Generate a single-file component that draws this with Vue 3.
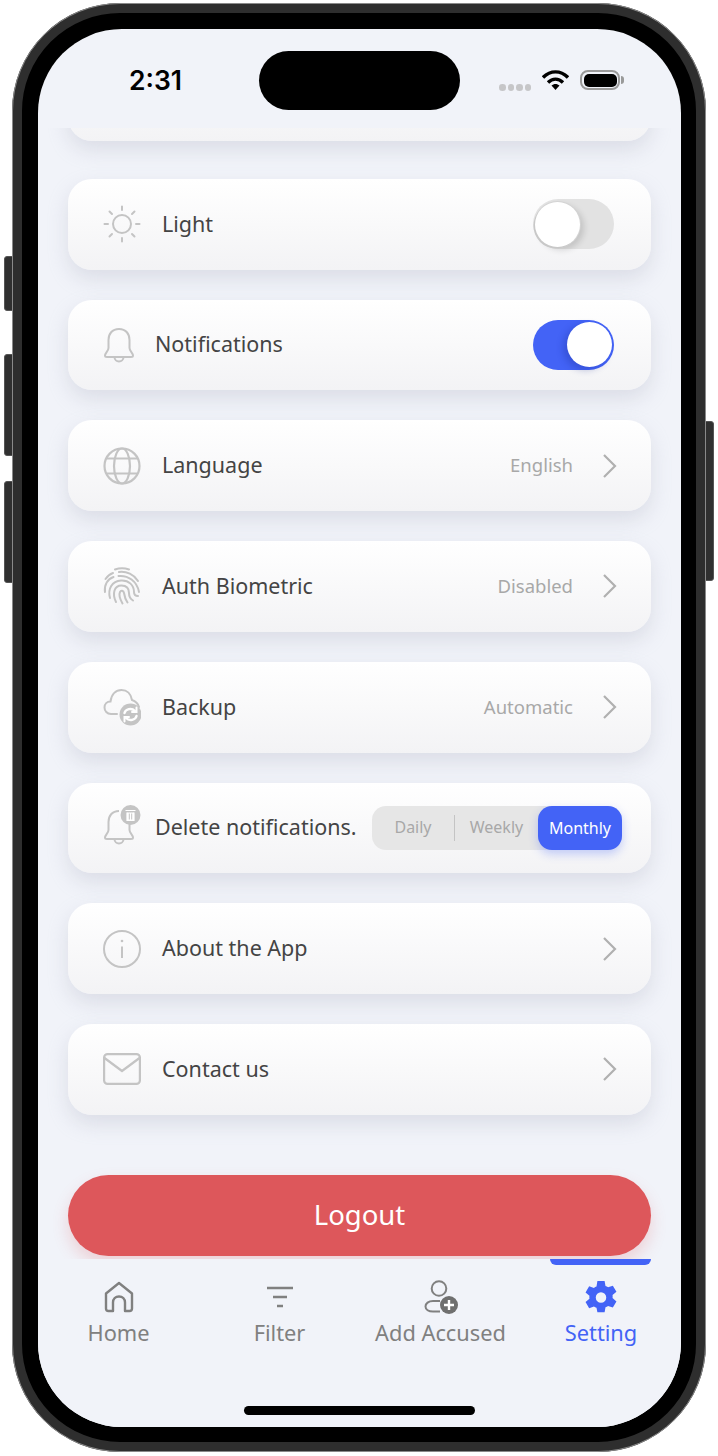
<script setup>
const rows = [
  { id: "light", label: "Light", icon: "sun", toggle: false },
  { id: "notifications", label: "Notifications", icon: "bell", toggle: true, narrow: true },
  { id: "language", label: "Language", icon: "globe", value: "English" },
  { id: "biometric", label: "Auth Biometric", icon: "finger", value: "Disabled" },
  { id: "backup", label: "Backup", icon: "cloud", value: "Automatic" },
  { id: "delete", label: "Delete notifications.", icon: "bellTrash", narrow: true, segment: true },
  { id: "about", label: "About the App", icon: "info", chevron: true },
  { id: "contact", label: "Contact us", icon: "mail", chevron: true }
]

const tabs = [
  { label: "Home", icon: "home" },
  { label: "Filter", icon: "filter" },
  { label: "Add Accused", icon: "add" },
  { label: "Setting", icon: "gear", active: true }
]
</script>

<template>
  <div class="page">
    <span class="side side-a"></span>
    <span class="side side-b"></span>
    <span class="side side-c"></span>
    <span class="side side-r"></span>
    <div class="phone">
      <div class="screen">
        <div class="status">
          <span class="time">2:31</span>
          <span class="island"></span>
          <div class="status-right">
            <div class="dots"><i></i><i></i><i></i><i></i></div>
            <svg width="27" height="20" viewBox="0 0 27 20">
              <path d="M1 7.500C8.500 0 18.500 0 26 7.500" fill="none" stroke="#000" stroke-width="3.400" />
              <path d="M6 12.500C10.500 8 16.500 8 21 12.500" fill="none" stroke="#000" stroke-width="3.400" />
              <path d="M9.500 15.500C11.800 13.400 15.200 13.400 17.500 15.500L13.500 20Z" fill="#000" />
            </svg>
            <div class="battery"><span class="cell"></span><span class="nub"></span></div>
          </div>
        </div>

        <div class="content">
          <div class="card cut"></div>
          <div v-for="row in rows" :key="row.id" class="card" :class="{ narrow: row.narrow }">
            <div class="icon">
              <svg v-if="row.icon === 'sun'" width="38" height="38" viewBox="0 0 38 38" fill="none" stroke="#c4c4c4" stroke-width="2" stroke-linecap="round">
                <circle cx="19" cy="19" r="9" />
                <path d="M19 1.500v3.500M19 33v3.500M1.500 19H5M33 19h3.500M6.500 6.500l2.500 2.500M29 29l2.500 2.500M31.500 6.500L29 9M9 29l-2.500 2.500" />
              </svg>
              <svg v-else-if="row.icon === 'bell'" width="32" height="36" viewBox="0 0 32 36" fill="none" stroke="#c4c4c4" stroke-width="2" stroke-linejoin="round">
                <path d="M16 2C9 2 5.500 7 5.500 13V21C5.500 24 2 26 2 28.500C2 29.500 2.800 30 4 30H28C29.200 30 30 29.500 30 28.500C30 26 26.500 24 26.500 21V13C26.500 7 23 2 16 2Z" />
                <path d="M11.500 30C11.500 36 20.500 36 20.500 30" />
              </svg>
              <svg v-else-if="row.icon === 'globe'" width="38" height="38" viewBox="0 0 38 38" fill="none" stroke="#c4c4c4" stroke-width="2.200">
                <circle cx="19" cy="19" r="17.500" />
                <ellipse cx="19" cy="19" rx="8" ry="17.500" />
                <path d="M4 11.500H34M4 26.500H34" />
              </svg>
              <svg v-else-if="row.icon === 'finger'" width="38" height="38" viewBox="0 0 38 38" fill="none" stroke="#c4c4c4" stroke-width="2" stroke-linecap="round">
                <path d="M12 2.500C16.500 1 21.500 1 26 2.500" />
                <path d="M2.500 12C4.500 9 7 7 10 6M16 5C23.500 4 31 7.500 35 14" />
                <path d="M2 25C1 18 4.500 12 10.500 10M15.500 9C25 8 34 14 36 25" />
                <path d="M7 31C4.500 22 9 14 18 13.500C26 13 31 18.500 31 25C31 27.500 32.500 29 35 29" />
                <path d="M13 35C9 27 11 18.500 18.500 18.500C24 18.500 26 22 26 26C26 29 27.500 32 30 33.500" />
                <path d="M19.500 36.500C17 32 16 27 17 25C18 23 20.500 23.500 21 26C21.500 29.500 22.500 32.500 24.500 35.500" />
              </svg>
              <svg v-else-if="row.icon === 'cloud'" width="38" height="38" viewBox="0 0 38 38" fill="none">
                <path d="M14 26H8C4 26 1.500 23 1.500 19.500C1.500 16 4 13.500 7.500 13.500C8.500 6 13 2 18.500 2C24 2 28 6 29 12C32 13 35 15.500 36 19" stroke="#c4c4c4" stroke-width="2" stroke-linecap="round" />
                <circle cx="27.500" cy="26.500" r="11" fill="#c4c4c4" />
                <path d="M21.500 25C22.500 21 28.500 19.500 32 23M33.500 28C32.500 32 26.500 33.500 23 30" stroke="#fff" stroke-width="2.400" stroke-linecap="round" />
                <path d="M33.500 19.500V24H29M21.500 33.500V29H26" stroke="#fff" stroke-width="2" stroke-linecap="round" />
              </svg>
              <svg v-else-if="row.icon === 'bellTrash'" width="38" height="46" viewBox="0 0 38 46" fill="none">
                <path d="M16 6C9 6 5.500 11 5.500 17V25C5.500 28 2 30 2 32.500C2 33.500 2.800 34 4 34H28C29.200 34 30 33.500 30 32.500C30 30 26.500 28 26.500 25V18" stroke="#c4c4c4" stroke-width="2" stroke-linejoin="round" />
                <path d="M11.500 34C11.500 40 20.500 40 20.500 34" stroke="#c4c4c4" stroke-width="2" />
                <circle cx="27.500" cy="10" r="10" fill="#c4c4c4" />
                <path d="M22.500 5.500H32.500M24 7.500V15.500H31V7.500" fill="#fff" stroke="#fff" stroke-width="1.200" />
                <path d="M26.300 8.500V14.500M28.700 8.500V14.500" stroke="#c4c4c4" stroke-width="1" />
              </svg>
              <svg v-else-if="row.icon === 'info'" width="38" height="38" viewBox="0 0 38 38" fill="none" stroke="#c4c4c4" stroke-width="2">
                <circle cx="19" cy="19" r="18" />
                <path d="M19 16.500V28" />
                <circle cx="19" cy="11" r="1.300" fill="#c4c4c4" stroke="none" />
              </svg>
              <svg v-else-if="row.icon === 'mail'" width="38" height="32" viewBox="0 0 38 32" fill="none" stroke="#c4c4c4" stroke-width="2.200" stroke-linejoin="round">
                <rect x="1.100" y="1.100" width="35.800" height="29.800" rx="3.500" />
                <path d="M1.500 5L19 18L36.500 5" />
              </svg>
            </div>
            <span class="label">{{ row.label }}</span>

            <div v-if="row.toggle !== undefined" class="switch" :class="{ on: row.toggle }"><span class="knob"></span></div>
            <div v-else-if="row.segment" class="segment">
              <span class="seg seg-daily">Daily</span>
              <span class="seg-line"></span>
              <span class="seg seg-weekly">Weekly</span>
              <span class="seg seg-active">Monthly</span>
            </div>
            <template v-else>
              <span v-if="row.value" class="value">{{ row.value }}</span>
              <svg class="chevron" width="16" height="26" viewBox="0 0 16 26" fill="none" stroke="#b0b0b0" stroke-width="2.200">
                <path d="M3 2L14 13L3 24" />
              </svg>
            </template>
          </div>
          <button class="logout">Logout</button>
        </div>

        <nav class="tabs">
          <div v-for="tab in tabs" :key="tab.label" class="tab" :class="{ active: tab.active }">
            <span v-if="tab.active" class="marker"></span>
            <div class="tab-icon">
              <svg v-if="tab.icon === 'home'" width="30" height="32" viewBox="0 0 30 32" fill="none" stroke="#808080" stroke-width="2.400" stroke-linejoin="round">
                <path d="M2 12.500L15 2L28 12.500V27.500C28 29 27 30 25.500 30H21V21.500C21 18 18.500 15.500 15 15.500C11.500 15.500 9 18 9 21.500V30H4.500C3 30 2 29 2 27.500Z" />
              </svg>
              <svg v-else-if="tab.icon === 'filter'" width="28" height="22" viewBox="0 0 28 22" fill="none" stroke="#808080" stroke-width="2.400">
                <path d="M1 2H27M7 11H21M11 20H17" />
              </svg>
              <svg v-else-if="tab.icon === 'add'" width="34" height="34" viewBox="0 0 34 34" fill="none">
                <circle cx="15" cy="8.500" r="7.300" stroke="#808080" stroke-width="2" />
                <path d="M16 21H9C4.500 21 1.500 23.500 1.500 26.500C1.500 29.500 4.500 31.500 9 31.500H16" stroke="#808080" stroke-width="2" />
                <circle cx="25" cy="25" r="9" fill="#6f6f6f" />
                <path d="M25 20V30M20 25H30" stroke="#fff" stroke-width="2.400" />
              </svg>
              <svg v-else-if="tab.icon === 'gear'" width="32" height="33" viewBox="1.500 1 21 22">
                <path fill="#4363f6" fill-rule="evenodd" d="M9.600 0h4.800l.6 3.300c.6.200 1.200.500 1.700.9l3.200-1.100 2.400 4.100-2.600 2.200c.1.700.1 1.300 0 2l2.600 2.200-2.400 4.100-3.200-1.100c-.5.400-1.100.7-1.700.9l-.6 3.300H9.600L9 17.900c-.6-.2-1.200-.5-1.700-.9l-3.200 1.100-2.400-4.100 2.600-2.200c-.1-.7-.1-1.300 0-2L1.700 7.600l2.400-4.100L7.300 4.600c.5-.4 1.100-.7 1.700-.9zM12 7.500a3.500 3.500 0 1 0 0 7 3.500 3.500 0 0 0 0-7z" transform="translate(0 1)" />
              </svg>
            </div>
            <span class="tab-label">{{ tab.label }}</span>
          </div>
          <span class="home-bar"></span>
        </nav>
      </div>
    </div>
  </div>
</template>

<style scoped>
.page {
  position: relative;
  width: 718px;
  height: 1456px;
  background: #fff;
  padding: 3px 0 0 12px;
  box-sizing: border-box;
  overflow: hidden;
  font-family: "Noto Sans", "Open Sans", sans-serif;
}

.side {
  position: absolute;
  background: #303030;
  border: 1px solid #555;
  box-sizing: border-box;
}

.side-a { left: 4px; top: 256px; width: 10px; height: 55px; border-radius: 3px 0 0 3px; }
.side-b { left: 4px; top: 354px; width: 10px; height: 102px; border-radius: 3px 0 0 3px; }
.side-c { left: 4px; top: 481px; width: 10px; height: 102px; border-radius: 3px 0 0 3px; }
.side-r { left: 704px; top: 421px; width: 10px; height: 160px; border-radius: 0 3px 3px 0; }

.phone {
  position: relative;
  width: 694px;
  height: 1449px;
  box-sizing: border-box;
  padding: 16px 15px 15px 16px;
  border-radius: 108px;
  background: #000;
  border: 10px solid #2e2e2e;
  outline: 1px solid #8a8a8a;
  outline-offset: -1px;
}

.screen {
  position: relative;
  display: flex;
  flex-direction: column;
  height: 100%;
  border-radius: 84px;
  overflow: hidden;
  background: #f1f3f9;
}

.status {
  display: flex;
  align-items: flex-start;
  height: 99px;
  flex-shrink: 0;
  padding: 22px 0 0 91px;
  box-sizing: border-box;
}

.time {
  width: 130px;
  margin-top: 11px;
  font-family: Inter, sans-serif;
  font-size: 26.500px;
  font-weight: 600;
  line-height: 36px;
  color: #000;
}

.island {
  width: 201px;
  height: 59px;
  border-radius: 30px;
  background: #000;
}

.status-right {
  display: flex;
  align-items: flex-start;
  margin-left: 39px;
  padding-top: 19px;
}

.dots {
  display: flex;
  gap: 2px;
  margin: 14px 11px 0 0;
}

.dots i {
  width: 6.500px;
  height: 6.500px;
  border-radius: 50%;
  background: #c6c6c8;
}

.battery {
  position: relative;
  width: 40px;
  height: 20px;
  margin-left: 11px;
  border: 2px solid #9a9a9a;
  border-radius: 8px;
  padding: 1.500px;
  box-sizing: border-box;
}

.cell {
  display: block;
  height: 100%;
  background: #000;
  border-radius: 5px;
}

.nub {
  position: absolute;
  right: -6px;
  top: 4px;
  width: 3px;
  height: 8px;
  border-radius: 0 3px 3px 0;
  background: #9a9a9a;
}

.content {
  flex: 1;
  min-height: 0;
  overflow: hidden;
  padding: 0 30px;
  display: flex;
  flex-direction: column;
  gap: 30px;
}

.card {
  display: flex;
  align-items: center;
  flex-shrink: 0;
  height: 90.750px;
  padding: 0 34px 0 35px;
  box-sizing: border-box;
  border-radius: 24px;
  background: linear-gradient(180deg, #fff 0%, #f3f3f5 100%);
  box-shadow: 0 9px 20px rgba(170, 172, 190, 0.3);
}

.card.cut {
  margin-top: -78px;
  margin-bottom: 8px;
}

.icon {
  display: flex;
  align-items: center;
  justify-content: center;
  width: 38px;
  height: 38px;
  margin-right: 21px;
  flex-shrink: 0;
}

.icon svg {
  flex-shrink: 0;
}

.narrow .icon {
  width: 34px;
  margin-right: 18px;
  justify-content: flex-start;
}

.label {
  flex: 1;
  padding-bottom: 2px;
  font-size: 21.500px;
  color: #444;
  white-space: nowrap;
}

.value {
  margin-right: 28px;
  padding-bottom: 2px;
  font-size: 18.500px;
  color: #a8a8a8;
}

.switch {
  position: relative;
  width: 81px;
  height: 50px;
  margin-right: 3px;
  border-radius: 25px;
  background: #e2e2e2;
}

.switch.on {
  background: #4363f6;
}

.knob {
  position: absolute;
  left: 2px;
  top: 3px;
  width: 45px;
  height: 45px;
  border-radius: 50%;
  background: #fff;
  box-shadow: -1.500px 1.500px 0 #c8c8c8, 0 0 0 1px #d4d4d4, 4px 3px 6px rgba(0, 0, 0, 0.14);
}

.on .knob {
  left: auto;
  right: 2px;
  top: 2px;
  box-shadow: -4px 3px 7px rgba(20, 40, 140, 0.28);
}

.segment {
  display: flex;
  align-items: center;
  width: 250px;
  height: 44px;
  margin-right: -5px;
  border-radius: 14px;
  background: #e6e6e6;
  flex-shrink: 0;
}

.seg {
  padding-bottom: 1px;
  font-size: 16px;
  color: #a8a8a8;
  text-align: center;
}

.seg-daily {
  width: 82px;
}

.seg-line {
  width: 1px;
  height: 26px;
  background: #c4c4c4;
}

.seg-weekly {
  flex: 1;
}

.seg-active {
  width: 84px;
  height: 44px;
  line-height: 44px;
  box-sizing: border-box;
  border-radius: 14px;
  background: #4363f6;
  color: #fff;
  box-shadow: 0 4px 10px rgba(67, 99, 246, 0.3);
}

.logout {
  flex-shrink: 0;
  height: 81px;
  margin-top: 30px;
  padding: 0 0 2px;
  border: none;
  border-radius: 41px;
  background: #dd575b;
  color: #fff;
  font-family: inherit;
  font-size: 27.500px;
  box-shadow: 0 8px 16px rgba(221, 87, 91, 0.22);
}

.tabs {
  position: relative;
  display: grid;
  grid-template-columns: 161px 161px 161px 160px;
  height: 168px;
  flex-shrink: 0;
  background: #f1f3f9;
}

.tab {
  position: relative;
  display: flex;
  flex-direction: column;
  align-items: center;
  padding-top: 20px;
  color: #808080;
}

.tab-icon {
  display: flex;
  align-items: center;
  justify-content: center;
  height: 36px;
}

.tab-label {
  margin-top: 3px;
  font-size: 21.800px;
  line-height: 30px;
  white-space: nowrap;
}

.active {
  color: #4363f6;
}

.marker {
  position: absolute;
  top: 0;
  left: 29px;
  width: 101px;
  height: 6px;
  border-radius: 0 0 6px 6px;
  background: #4363f6;
}

.home-bar {
  position: absolute;
  left: 206px;
  bottom: 12px;
  width: 231px;
  height: 9px;
  border-radius: 5px;
  background: #000;
}
</style>
